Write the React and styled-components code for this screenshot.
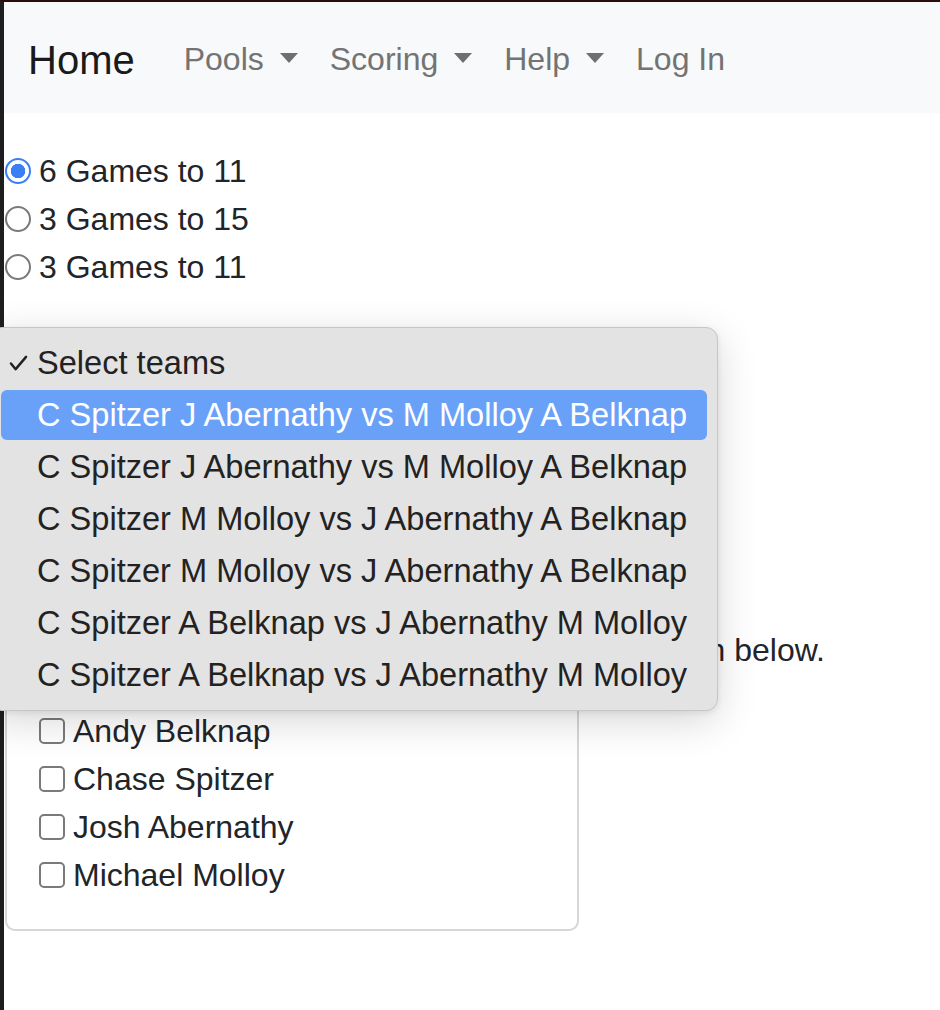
import React, { useState } from "react";
import styled, { createGlobalStyle } from "styled-components";

const formats = ["6 Games to 11", "3 Games to 15", "3 Games to 11"];

const teamOptions = [
  "C Spitzer J Abernathy vs M Molloy A Belknap",
  "C Spitzer J Abernathy vs M Molloy A Belknap",
  "C Spitzer M Molloy vs J Abernathy A Belknap",
  "C Spitzer M Molloy vs J Abernathy A Belknap",
  "C Spitzer A Belknap vs J Abernathy M Molloy",
  "C Spitzer A Belknap vs J Abernathy M Molloy",
];

const players = ["Andy Belknap", "Chase Spitzer", "Josh Abernathy", "Michael Molloy"];

const App = () => {
  const [format, setFormat] = useState(0);
  const [picked, setPicked] = useState({});

  return (
    <>
      <GlobalStyle />
      <Frame>
        <NavBar>
          <Brand>Home</Brand>
          <NavLink $caret>Pools</NavLink>
          <NavLink $caret>Scoring</NavLink>
          <NavLink $caret>Help</NavLink>
          <NavLink>Log In</NavLink>
        </NavBar>

        <Content>
          <RadioGroup>
            {formats.map((f, i) => (
              <RadioRow key={f + i}>
                <Radio
                  type="radio"
                  name="format"
                  checked={format === i}
                  onChange={() => setFormat(i)}
                />
                {f}
              </RadioRow>
            ))}
          </RadioGroup>

          <SelectWrap>
            <ClosedSelect>Select teams</ClosedSelect>
            {/* native select popup, shown open */}
            <Popup>
              <Option>
                <Check viewBox="0 0 20 18">
                  <polyline points="2,9 7,15 18,2" />
                </Check>
                Select teams
              </Option>
              {teamOptions.map((t, i) => (
                <Option key={i} $active={i === 0}>
                  {t}
                </Option>
              ))}
            </Popup>
          </SelectWrap>

          <Hint>Or select players for each team from the list shown below.</Hint>

          <PlayerCard>
            {players.map((p) => (
              <CheckRow key={p}>
                <CheckBox
                  type="checkbox"
                  checked={!!picked[p]}
                  onChange={() => setPicked({ ...picked, [p]: !picked[p] })}
                />
                {p}
              </CheckRow>
            ))}
          </PlayerCard>
        </Content>
      </Frame>
    </>
  );
};

const GlobalStyle = createGlobalStyle`
  * {
    box-sizing: border-box;
  }
  body {
    margin: 0;
    background: #ffffff;
    font-family: "Liberation Sans", Arial, sans-serif;
    color: #212529;
    overflow-x: hidden;
  }
`;

const Frame = styled.div`
  min-height: 100vh;
  border-left: 4px solid #1e1e1f;
  border-top: 2px solid #2a0c0c;
`;

const NavBar = styled.nav`
  height: 111px;
  background: #f8f9fa;
  display: flex;
  align-items: center;
  padding: 4px 0 0 24px;
`;

const Brand = styled.a`
  font-size: 40px;
  color: #1a1a1a;
  margin-right: 33px;
  margin-top: 1px;
`;

const NavLink = styled.a`
  font-size: 32px;
  color: #737373;
  padding: 0 16px;
  display: flex;
  align-items: center;

  &::after {
    content: "";
    display: ${(p) => (p.$caret ? "inline-block" : "none")};
    margin-left: 16px;
    border-top: 10px solid #6f6f6f;
    border-left: 9.5px solid transparent;
    border-right: 9.5px solid transparent;
    margin-top: -3px;
  }
`;

const Content = styled.main`
  padding-left: 1px;
`;

const RadioGroup = styled.div`
  margin-top: 34px;
`;

const RadioRow = styled.label`
  display: flex;
  align-items: center;
  height: 48px;
  font-size: 32px;
  line-height: 48px;
`;

const Radio = styled.input`
  appearance: none;
  width: 26px;
  height: 26px;
  margin: 0 8px 0 0;
  border-radius: 50%;
  border: 2px solid #7a7a7a;
  background: #fff;

  &:checked {
    border-color: #3b7ff5;
    background: radial-gradient(circle, #3b7ff5 0 7px, #fff 7.5px 100%);
  }
`;

const SelectWrap = styled.div`
  position: relative;
  margin-top: 48px;
  height: 48px;
  width: 700px;
`;

const ClosedSelect = styled.div`
  height: 48px;
  font-size: 32px;
  line-height: 48px;
  padding-left: 32px;
  border: 2px solid #ced4da;
  border-radius: 8px;
`;

const Popup = styled.div`
  position: absolute;
  top: -12px;
  left: -15px;
  width: 728px;
  padding: 10px 10px;
  display: flex;
  flex-direction: column;
  gap: 2px;
  background: #e3e3e3;
  border: 1px solid #c6c6c6;
  border-radius: 12px;
  box-shadow: 0 10px 40px rgba(0, 0, 0, 0.16), 0 2px 6px rgba(0, 0, 0, 0.08);
  z-index: 10;
`;

const Option = styled.div`
  position: relative;
  height: 50px;
  padding-left: 36px;
  border-radius: 6px;
  font-size: 32.6px;
  line-height: 50px;
  white-space: nowrap;
  color: ${(p) => (p.$active ? "#ffffff" : "#222222")};
  background: ${(p) => (p.$active ? "#6aa1f8" : "transparent")};
`;

const Check = styled.svg`
  position: absolute;
  left: 8px;
  top: 17px;
  width: 19px;
  height: 17px;
  fill: none;
  stroke: #222;
  stroke-width: 2.6;
  stroke-linecap: round;
  stroke-linejoin: round;
`;

const Hint = styled.p`
  margin: 239px 0 0;
  font-size: 32px;
  line-height: 48px;
  white-space: nowrap;
`;

const PlayerCard = styled.section`
  margin-top: 16px;
  width: 574px;
  border: 2px solid #d6d6d6;
  border-radius: 10px;
  padding: 15px 16px 30px 31px;
`;

const CheckRow = styled.label`
  display: flex;
  align-items: center;
  height: 48px;
  font-size: 32px;
  line-height: 48px;
`;

const CheckBox = styled.input`
  appearance: none;
  width: 26px;
  height: 26px;
  margin: 0 8px 0 1px;
  border: 2px solid #7a7a7a;
  border-radius: 5px;
  background: #fff;
`;

export default App;
